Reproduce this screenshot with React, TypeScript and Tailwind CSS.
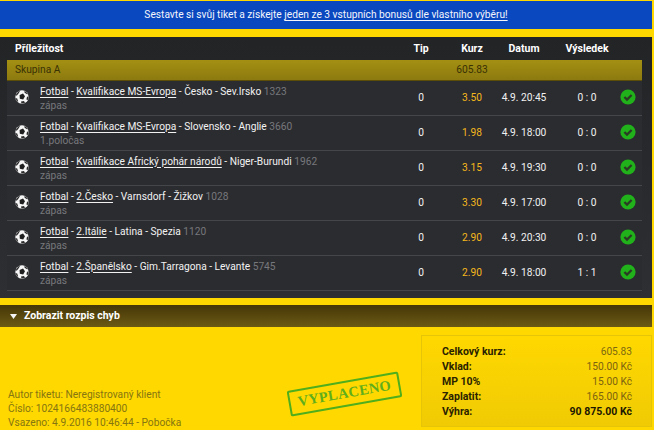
import React from 'react';

type Bet = {
  league: string;
  teams: string;
  id: string;
  kind: string;
  kurz: string;
  datum: string;
  vysledek: string;
};

const bets: Bet[] = [
  { league: 'Kvalifikace MS-Evropa', teams: 'Česko - Sev.Irsko', id: '1323', kind: 'zápas', kurz: '3.50', datum: '4.9. 20:45', vysledek: '0 : 0' },
  { league: 'Kvalifikace MS-Evropa', teams: 'Slovensko - Anglie', id: '3660', kind: '1.poločas', kurz: '1.98', datum: '4.9. 18:00', vysledek: '0 : 0' },
  { league: 'Kvalifikace Africký pohár národů', teams: 'Niger-Burundi', id: '1962', kind: 'zápas', kurz: '3.15', datum: '4.9. 19:30', vysledek: '0 : 0' },
  { league: '2.Česko', teams: 'Varnsdorf - Žižkov', id: '1028', kind: 'zápas', kurz: '3.30', datum: '4.9. 17:00', vysledek: '0 : 0' },
  { league: '2.Itálie', teams: 'Latina - Spezia', id: '1120', kind: 'zápas', kurz: '2.90', datum: '4.9. 20:30', vysledek: '0 : 0' },
  { league: '2.Španělsko', teams: 'Gim.Tarragona - Levante', id: '5745', kind: 'zápas', kurz: '2.90', datum: '4.9. 18:00', vysledek: '1 : 1' },
];

const totals = [
  { label: 'Celkový kurz:', value: '605.83', color: 'text-[#7d6a10]' },
  { label: 'Vklad:', value: '150.00 Kč', color: 'text-[#7d6210]' },
  { label: 'MP 10%', value: '15.00 Kč', color: 'text-[#7d6210]' },
  { label: 'Zaplatit:', value: '165.00 Kč', color: 'text-[#7d6210]' },
  { label: 'Výhra:', value: '90 875.00 Kč', color: 'text-[10.5px] font-bold text-[#1c1700]' },
];

function Ball() {
  return (
    <svg width="14" height="14" viewBox="0 0 14 14" className="shrink-0 -translate-y-px">
      <circle cx="7" cy="7" r="6.7" fill="#f6f6f6" />
      <path d="M4.6 5 L8 3.6 L10 6.2 L8.2 9.4 L4.8 8.8 Z" fill="#1f1f1f" />
      <path d="M1 4.4 L3.6 1.2 L5 1 L3.4 3.8 L1.4 6 Z" fill="#2a2a2a" />
      <path d="M9.4 0.8 L12.6 3.2 L12.4 4.4 L9.6 2.8 Z" fill="#2a2a2a" />
      <path d="M0.4 8 L2.2 8.4 L3.2 11.4 L2 11.4 Z" fill="#2a2a2a" />
      <path d="M6 11.6 L9 11 L10 13 L6.4 13.6 Z" fill="#2a2a2a" />
      <path d="M12 6.8 L13.6 6.4 L13 10 L11.4 9.6 Z" fill="#2a2a2a" />
    </svg>
  );
}

function Check() {
  return (
    <svg width="16" height="16" viewBox="0 0 16 16" className="shrink-0 -translate-y-px">
      <circle cx="8" cy="8" r="7.6" fill="#21b11a" />
      <path d="M4.4 8 L7 10.6 L11.6 6" fill="none" stroke="#2a3a24" strokeWidth="2.2" />
    </svg>
  );
}

function BetRow({ bet }: { bet: Bet }) {
  return (
    <div className="flex h-[35px] items-center border-b border-[#45464a] bg-[#2b2c30] pl-[8px] pr-[6px]">
      <Ball />
      <div className="ml-[11px] w-[352px] pt-px leading-[14px]">
        <div className="whitespace-nowrap text-[#f2f2f2]">
          <span className="underline underline-offset-2">Fotbal</span>
          {' - '}
          <span className="underline underline-offset-2">{bet.league}</span>
          {' - '}
          {bet.teams} <span className="text-[#77787c]">{bet.id}</span>
        </div>
        <div className="text-[#77787c]">{bet.kind}</div>
      </div>
      <div className="w-[58px] text-center text-[#f2f2f2]">0</div>
      <div className="w-[44px] text-center text-[#f5b81c]">{bet.kurz}</div>
      <div className="w-[60px] text-center whitespace-nowrap text-[#f2f2f2]">{bet.datum}</div>
      <div className="w-[66px] text-center text-[#f2f2f2]">{bet.vysledek}</div>
      <Check />
    </div>
  );
}

export default function App() {
  return (
    <div className="h-[430px] w-[654px] overflow-hidden bg-[#ffd800] pt-px font-['Roboto',sans-serif] text-[10.2px]">
      <div className="flex h-[28px] w-[652px] items-center justify-center bg-[#0a48c0] text-[#f4f6fb]">
        <span>
          Sestavte si svůj tiket a získejte{' '}
          <span className="underline underline-offset-2">jeden ze 3 vstupních bonusů dle vlastního výběru!</span>
        </span>
      </div>

      <div className="mt-[8px] h-[261px] w-[652px] bg-gradient-to-b from-[#232426] to-[#2e2f33] px-[7px]">
        <div className="flex h-[23px] items-center pr-[6px] text-[10.5px] font-bold text-white">
          <div className="ml-[8px] w-[377px]">Příležitost</div>
          <div className="w-[58px] text-center">Tip</div>
          <div className="w-[44px] text-center">Kurz</div>
          <div className="w-[60px] text-center">Datum</div>
          <div className="w-[66px] text-center">Výsledek</div>
        </div>
        <div className="flex h-[21px] w-[635px] items-center border-b border-[#5c4e08] bg-gradient-to-b from-[#a39012] to-[#8d7a10] pl-[8px] text-[#3a3205]">
          <div className="w-[377px]">Skupina A</div>
          <div className="w-[58px]" />
          <div className="w-[44px] text-center">605.83</div>
        </div>
        <div className="w-[635px]">
          {bets.map((bet) => (
            <BetRow key={bet.id} bet={bet} />
          ))}
        </div>
      </div>

      <div className="mt-[7px] flex h-[22px] w-[652px] items-center gap-[7px] bg-gradient-to-b from-[#453708] to-[#6c5a14] pl-[10px] text-[10.5px] font-bold text-white">
        <svg width="7" height="5" viewBox="0 0 7 5">
          <path d="M0 0 H7 L3.5 5 Z" fill="#f4f4f4" />
        </svg>
        Zobrazit rozpis chyb
      </div>

      <div className="relative flex h-[103px] w-[652px] justify-between pt-[8px]">
        <div className="mt-[53px] pl-[8px] leading-[14px] text-[#857610]">
          <div>Autor tiketu: Neregistrovaný klient</div>
          <div>Číslo: 1024166483880400</div>
          <div>Vsazeno: 4.9.2016 10:46:44 - Pobočka</div>
        </div>
        <div className="absolute left-[288px] top-[54px] flex h-[26px] w-[113px] -rotate-[10deg] items-center justify-center rounded-[2px] border-[2px] border-[#4fae1c] font-['Liberation_Serif',serif] text-[14.5px] font-bold tracking-[0.3px] text-[#5fae1c]">
          VYPLACENO
        </div>
        <div className="h-[92px] w-[231px] border border-[#e6c408] bg-gradient-to-b from-[#ffd800] to-[#f0cb04] pl-[20px] pr-[19px] pt-[8px]">
          {totals.map((row) => (
            <div key={row.label} className="flex h-[15px] items-center justify-between">
              <span className="text-[10.5px] font-bold text-[#2a2200]">{row.label}</span>
              <span className={row.color}>{row.value}</span>
            </div>
          ))}
        </div>
      </div>
    </div>
  );
}
